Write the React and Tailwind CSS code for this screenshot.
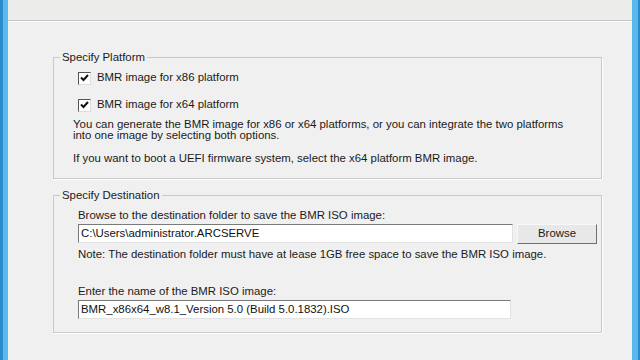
import React from 'react';

const Check = () => (
  <span className="w-[13px] h-[13px] border border-[#555] border-r-[#ddd] border-b-[#ddd] bg-white flex items-center justify-center shrink-0">
    <svg width="9" height="8" viewBox="0 0 9 8">
      <path d="M1 3.5 L3.5 6 L8 1" fill="none" stroke="#111" strokeWidth="2" />
    </svg>
  </span>
);

const Field = ({ value, width }) => (
  <div className={`${width} h-[19px] bg-white border border-[#7a7a7a] border-r-[#e3e3e3] border-b-[#e3e3e3] flex items-center px-[2px] text-[11.4px] text-[#111] whitespace-nowrap overflow-hidden`}>
    {value}
  </div>
);

export default function App() {
  return (
    <div className="w-[640px] h-[360px] flex bg-[#f0f0f0] overflow-hidden" style={{ fontFamily: '"Liberation Sans", Arial, sans-serif' }}>
      <div className="w-[8px] flex shrink-0">
        <div className="w-[3px] bg-[#2a8ccc]" />
        <div className="w-[5px] bg-[#58b9ec]" />
      </div>
      <div className="flex-1 flex flex-col">
        <div className="h-[21px] bg-[#ecedeb] border-b border-[#c4c4c4]" />
        <div className="h-px bg-white" />
        <div className="pl-[45px] pr-[30px] pt-[28px] text-[11.4px] text-[#1a1a1a]">
          <fieldset className="h-[129px] border border-[#c9c9c9] shadow-[1px_1px_0_#fff] px-[24px]">
            <legend className="px-[2px] ml-[-18px] leading-[14px]">Specify Platform</legend>
            <div className="flex flex-col">
              <div className="flex items-center gap-[6px] mt-[7px] h-[14px]">
                <Check />
                <span>BMR image for x86 platform</span>
              </div>
              <div className="flex items-center gap-[6px] mt-[13px] h-[14px]">
                <Check />
                <span>BMR image for x64 platform</span>
              </div>
              <p className="ml-[-5px] mt-[7px] leading-[11px]">
                You can generate the BMR image for x86 or x64 platforms, or you can integrate the two platforms<br />
                into one image by selecting both options.
              </p>
              <p className="ml-[-5px] mt-[12px] leading-[11px]">If you want to boot a UEFI firmware system, select the x64 platform BMR image.</p>
            </div>
          </fieldset>
          <fieldset className="mt-[9px] h-[145px] border border-[#c9c9c9] shadow-[1px_1px_0_#fff] pl-[24px] pr-[4px]">
            <legend className="px-[2px] ml-[-18px] leading-[14px]">Specify Destination</legend>
            <div className="flex flex-col">
              <span className="mt-[7px] leading-[12px]">Browse to the destination folder to save the BMR ISO image:</span>
              <div className="flex mt-[3px] gap-[4px]">
                <Field value="C:\Users\administrator.ARCSERVE" width="w-[435px]" />
                <button className="w-[80px] h-[20px] bg-[#e8e8e8] border border-[#f8f8f8] border-r-[#707070] border-b-[#707070] text-[11.4px] text-[#1a1a1a]">Browse</button>
              </div>
              <span className="mt-[4px] leading-[12px]">Note: The destination folder must have at lease 1GB free space to save the BMR ISO image.</span>
              <span className="mt-[25px] leading-[12px]">Enter the name of the BMR ISO image:</span>
              <div className="mt-[3px]">
                <Field value="BMR_x86x64_w8.1_Version 5.0 (Build 5.0.1832).ISO" width="w-[433px]" />
              </div>
            </div>
          </fieldset>
        </div>
      </div>
      <div className="w-[8px] flex shrink-0">
        <div className="w-[6px] bg-[#58b9ec]" />
        <div className="w-[2px] bg-[#2a8ccc]" />
      </div>
    </div>
  );
}
